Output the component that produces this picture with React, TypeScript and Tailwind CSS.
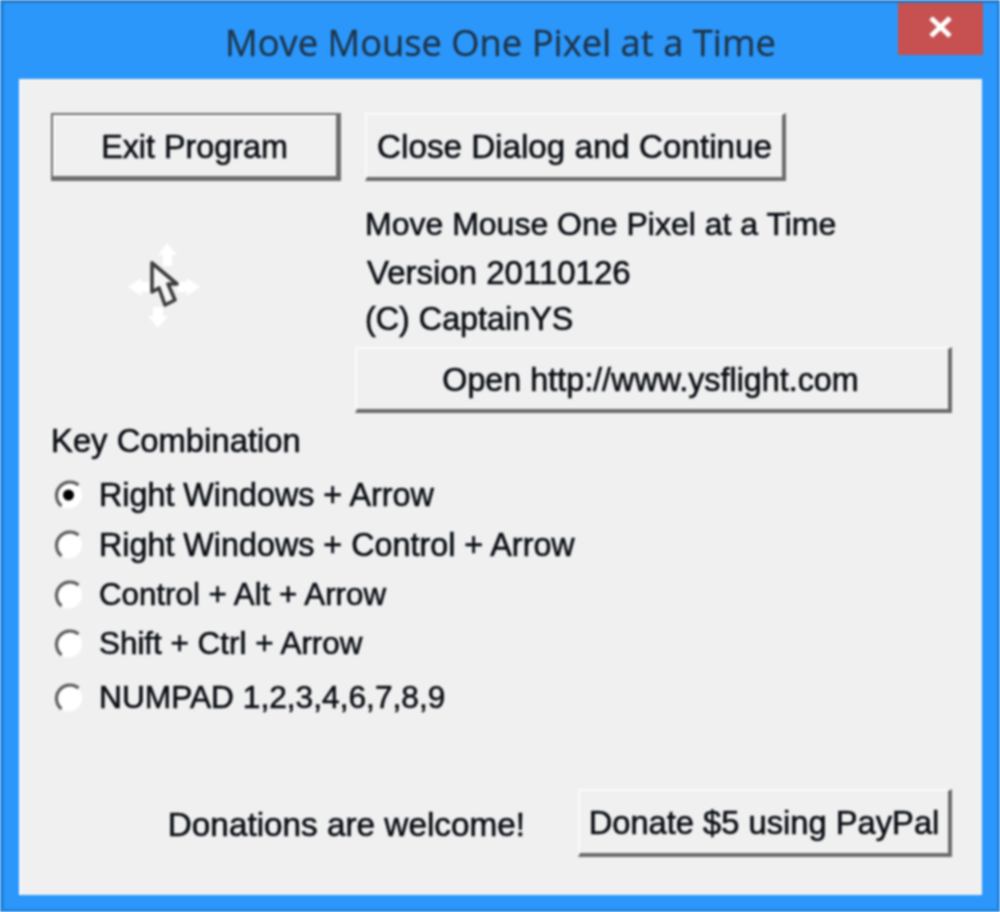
const OPTIONS = [
  { label: 'Right Windows + Arrow', checked: true, className: 'h-[50px]', text: 'text-[32.3px]' },
  { label: 'Right Windows + Control + Arrow', checked: false, className: 'h-[50px]', text: 'text-[32.3px]' },
  { label: 'Control + Alt + Arrow', checked: false, className: 'h-[50px]', text: 'text-[31.3px]' },
  { label: 'Shift + Ctrl + Arrow', checked: false, className: 'h-[48px]', text: 'text-[31.4px]' },
  { label: 'NUMPAD 1,2,3,4,6,7,8,9', checked: false, className: 'h-[60px]', text: 'text-[31.7px]' },
]

function WinButton({ children, className, primary }: { children: string; className: string; primary?: boolean }) {
  const edges = primary
    ? 'border-t-2 border-l-2 border-r-[5px] border-b-[5px] border-[#6e6e6e] shadow-[inset_2px_2px_0_#fbfbfb] pt-[3px]'
    : 'border-t-2 border-l-2 border-r-[4px] border-b-[4px] border-t-[#fafafa] border-l-[#fafafa] border-r-[#6c6c6c] border-b-[#6c6c6c] pt-[2px]'
  return (
    <button className={`flex items-center justify-center bg-[#f0f0f0] text-[#0a0e14] ${edges} ${className}`}>
      {children}
    </button>
  )
}

function Radio({ checked }: { checked: boolean }) {
  return (
    <svg width="34" height="34" viewBox="0 0 34 34" className="shrink-0">
      <circle cx="17.5" cy="17" r="13.5" fill="#ffffff" />
      <path d="M27.5 7 A13 13 0 0 0 10.5 28" fill="none" stroke="#5e5e5e" strokeWidth="3.2" />
      {checked && <circle cx="17.5" cy="17" r="5.5" fill="#000000" />}
    </svg>
  )
}

function MoveCursor() {
  return (
    <svg width="76" height="90" viewBox="0 0 76 90">
      {/* four white move arrows */}
      <path d="M40 1 L50 13 L45 13 L45 24 L36 24 L36 13 L31 13 Z" fill="#ffffff" />
      <path d="M31 86 L21 74 L26 74 L26 65 L36 65 L36 74 L41 74 Z" fill="#ffffff" />
      <path d="M1 45 L14 36 L14 40 L23 40 L23 50 L14 50 L14 54 Z" fill="#ffffff" />
      <path d="M73 45 L60 36 L60 40 L50 40 L50 50 L60 50 L60 54 Z" fill="#ffffff" />
      {/* arrow pointer */}
      <path
        d="M25 21 L25 50 L32 46 L38 63 L48 58 L41 42 L50 42 Z"
        fill="#f6f6f6"
        stroke="#3c3c3c"
        strokeWidth="3.6"
        strokeLinejoin="round"
      />
    </svg>
  )
}

export default function App() {
  return (
    <div className="w-[1000px] h-[912px] flex flex-col bg-[#2b97fb] border-t-[3px] border-l-[4px] border-r-[3px] border-b-[3px] border-t-[#2478c8] border-l-[#2082dc] border-r-[#2082dc] border-b-[#2082dc] blur-[0.8px] font-['Liberation_Sans',sans-serif] text-[32.3px] text-[#0a0e14] [-webkit-text-stroke:0.6px_#0a0e14] overflow-hidden">
      {/* title bar */}
      <div className="relative h-[76px] shrink-0 flex items-center justify-center pt-[2px]">
        <span className="font-['Open_Sans',sans-serif] text-[36.3px] text-[#1f3347] [-webkit-text-stroke:0.3px_#1f3347]">Move Mouse One Pixel at a Time</span>
        <div className="absolute top-0 right-[14px] w-[85px] h-[52px] flex items-center justify-center pb-[4px] bg-[#c75050]">
          <svg width="25" height="22" viewBox="0 0 25 22">
            <path d="M3 2 L22 20 M22 2 L3 20" stroke="#ffffff" strokeWidth="5" />
          </svg>
        </div>
      </div>

      {/* dialog client area */}
      <div className="flex-1 ml-[15px] mr-[15px] mb-[14px] bg-[#f0f0f0] border-t-2 border-l-2 border-t-[#fbf6ee] border-l-[#fbfbfb] pl-[30px] pr-[29px] pt-[32px] flex flex-col">
        <div className="flex gap-[24px]">
          <WinButton primary className="w-[290px] h-[68px]">Exit Program</WinButton>
          <WinButton className="w-[421px] h-[68px] text-[33.2px]">Close Dialog and Continue</WinButton>
        </div>

        <div className="flex mt-[18px]">
          <div className="w-[304px] shrink-0 pl-[76px] pt-[43px]">
            <MoveCursor />
          </div>
          <div className="ml-[10px] flex flex-col">
            <div className="h-[50px] flex items-center text-[32px]">Move Mouse One Pixel at a Time</div>
            <div className="h-[48px] flex items-center pl-[2px] text-[33px]">Version 20110126</div>
            <div className="h-[44px] flex items-center">(C) CaptainYS</div>
          </div>
        </div>

        <WinButton className="w-[597px] h-[66px] ml-[304px] mt-[6px] pr-[4px]">Open http://www.ysflight.com</WinButton>

        <div className="mt-[10px] h-[36px] flex items-center text-[32.8px]">Key Combination</div>

        <div className="mt-[11px] flex flex-col">
          {OPTIONS.map(opt => (
            <div key={opt.label} className={`flex items-center gap-[14px] ${opt.className}`}>
              <Radio checked={opt.checked} />
              <span className={opt.text}>{opt.label}</span>
            </div>
          ))}
        </div>

        <div className="mt-auto mb-[38px] mr-[1px] flex items-center justify-end">
          <span className="mr-[53px] pt-[4px] text-[33.3px]">Donations are welcome!</span>
          <WinButton className="w-[374px] h-[68px] text-[32.7px]">Donate $5 using PayPal</WinButton>
        </div>
      </div>
    </div>
  )
}
